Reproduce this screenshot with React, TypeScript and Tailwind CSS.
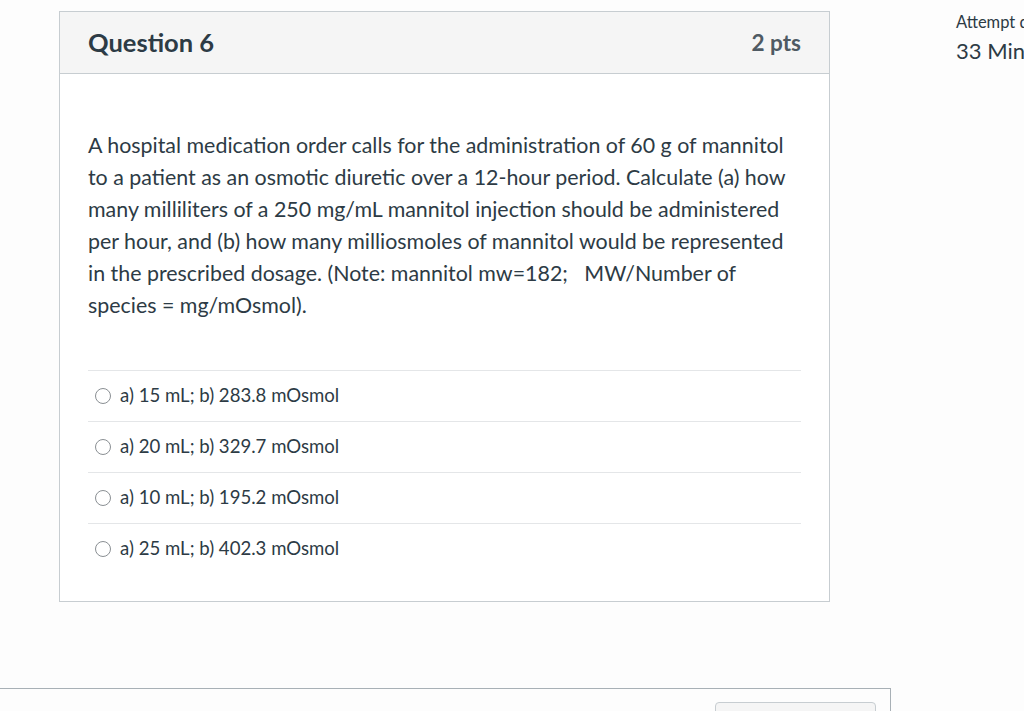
const answers = [
  "a) 15 mL; b) 283.8 mOsmol",
  "a) 20 mL; b) 329.7 mOsmol",
  "a) 10 mL; b) 195.2 mOsmol",
  "a) 25 mL; b) 402.3 mOsmol",
];

function Radio() {
  return <span className="inline-block h-[16px] w-[16px] shrink-0 rounded-full border-[1.5px] border-[#8a8f93] bg-white" />;
}

export default function App() {
  return (
    <div className="h-[711px] w-[1024px] overflow-hidden bg-[#fdfdfd] text-[#2d3b45]" style={{ fontFamily: "Lato, 'Noto Sans', sans-serif" }}>
      <div className="flex pt-[11px]">
        {/* question card */}
        <div className="ml-[59px] w-[771px] shrink-0 border border-[#c7cdd1] bg-white">
          <div className="flex h-[62px] items-center justify-between border-b border-[#c7cdd1] bg-[#f5f5f5] px-[28px]">
            <h2 className="text-[25.5px] font-bold text-[#2d3b45]">Question 6</h2>
            <span className="text-[22.5px] font-bold text-[#4f5a63]">2 pts</span>
          </div>
          <div className="px-[28px] pt-[55px] pb-[27px]">
            <p className="text-[21.4px] leading-[32px]">
              A hospital medication order calls for the administration of 60 g of mannitol to a patient as an osmotic
              diuretic over a 12-hour period. Calculate (a) how many milliliters of a 250 mg/mL mannitol injection
              should be administered per hour, and (b) how many milliosmoles of mannitol would be represented in the
              prescribed dosage. (Note: mannitol mw=182;&nbsp;&nbsp; MW/Number of species = mg/mOsmol).
            </p>
            <div className="mt-[49px]">
              {answers.map((a) => (
                <div key={a} className="flex h-[51px] items-center gap-[9px] border-t border-[#e4e6e8] pl-[7px] text-[18.6px]">
                  <Radio />
                  <span>{a}</span>
                </div>
              ))}
            </div>
          </div>
        </div>
        {/* side info */}
        <div className="ml-[126px] shrink-0 whitespace-nowrap">
          <div className="text-[16.5px] leading-[22px]">Attempt due</div>
          <div className="mt-[4px] text-[22px] leading-[28px]">33 Minutes</div>
        </div>
      </div>
      {/* footer bar */}
      <div className="mt-[86px] flex h-[40px] w-[891px] justify-end border-t border-r border-[#a8b0b6] pr-[14px] pt-[13px]">
        <div className="h-[40px] w-[161px] rounded-t-[4px] border border-[#c7cdd1] bg-[#f5f5f5]" />
      </div>
    </div>
  );
}
